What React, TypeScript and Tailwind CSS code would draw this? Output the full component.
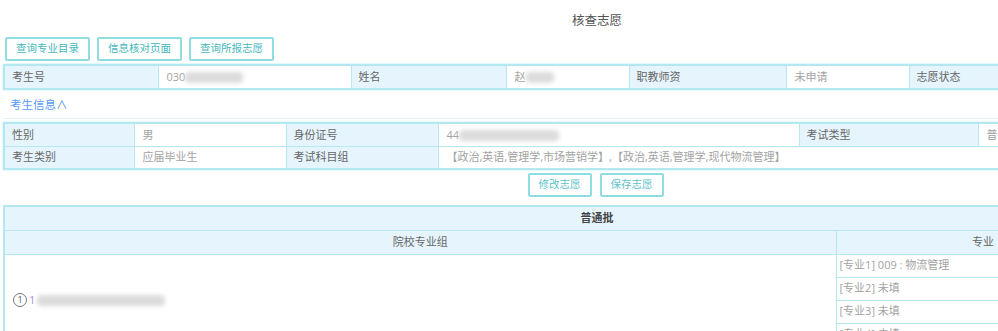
import React from "react";

const FONT = { fontFamily: '"Open Sans", "Noto Sans CJK SC", sans-serif' };

const lbl = "bg-[#e6f5fd] text-[#666] border border-[#b8e6f2] px-[7px] text-left font-normal";
const val = "bg-white text-[#a3a3a3] border border-[#b8e6f2] px-[8px] text-left font-normal";
const head = "bg-[#e6f5fd] border border-[#b8e6f2] text-center font-normal text-[#666]";

function Blur({ w }: { w: number }) {
  return (
    <span
      className="inline-block h-[11px] bg-[#dcdcdc] blur-[2px] align-middle rounded-sm"
      style={{ width: w }}
    />
  );
}

function TopButton({ children }: { children: React.ReactNode }) {
  return (
    <button className="h-[24px] w-[85px] rounded-[2px] border-2 border-[#8edde0] bg-white text-[10.5px] text-[#45b7bd]">
      {children}
    </button>
  );
}

const MAJORS = ["[专业1] 009 : 物流管理", "[专业2] 未填", "[专业3] 未填", "[专业4] 未填"];

export default function App() {
  return (
    <div className="w-[998px] h-[331px] overflow-hidden bg-white" style={FONT}>
      <div className="w-[1194px] px-[3px] text-[11px]">
        <div className="h-[37px] pt-[12px] text-center text-[12.5px] text-[#555]">核查志愿</div>

        <div className="flex gap-[7px] pl-[2px] h-[27px]">
          <TopButton>查询专业目录</TopButton>
          <TopButton>信息核对页面</TopButton>
          <TopButton>查询所报志愿</TopButton>
        </div>

        <table className="w-full border-collapse table-fixed border-2 border-[#b3e8f0] shadow-[0_0_2px_#b3e8f0]">
          <colgroup>
            <col className="w-[154px]" />
            <col className="w-[193px]" />
            <col className="w-[155px]" />
            <col className="w-[123px]" />
            <col className="w-[157px]" />
            <col className="w-[123px]" />
            <col className="w-[155px]" />
            <col />
          </colgroup>
          <tbody>
            <tr className="h-[24px]">
              <th className={lbl}>考生号</th>
              <td className={val}>
                030<Blur w={58} />
              </td>
              <th className={lbl}>姓名</th>
              <td className={val}>
                赵<Blur w={28} />
              </td>
              <th className={lbl}>职教师资</th>
              <td className={val}>未申请</td>
              <th className={lbl}>志愿状态</th>
              <td className={val}></td>
            </tr>
          </tbody>
        </table>

        <div className="h-[29px] border-b border-[#e6f5f7] pl-[7px] pt-[6px] text-[11.5px] text-[#5b9cf2]">
          考生信息∧
        </div>

        <table className="mt-[3px] w-full border-collapse table-fixed border-2 border-[#b3e8f0] shadow-[0_0_2px_#b3e8f0]">
          <colgroup>
            <col className="w-[130px]" />
            <col className="w-[152px]" />
            <col className="w-[152px]" />
            <col className="w-[361px]" />
            <col className="w-[179px]" />
            <col />
          </colgroup>
          <tbody>
            <tr className="h-[23px]">
              <th className={lbl}>性别</th>
              <td className={val}>男</td>
              <th className={lbl}>身份证号</th>
              <td className={val}>
                44<Blur w={100} />
              </td>
              <th className={lbl}>考试类型</th>
              <td className={val}>普通</td>
            </tr>
            <tr className="h-[23px]">
              <th className={lbl}>考生类别</th>
              <td className={val}>应届毕业生</td>
              <th className={lbl}>考试科目组</th>
              <td className={val} colSpan={3}>
                【政治,英语,管理学,市场营销学】,【政治,英语,管理学,现代物流管理】
              </td>
            </tr>
          </tbody>
        </table>

        <div className="flex justify-center gap-[8px] pt-[3px] h-[35px] pr-[3px]">
          <button className="h-[24px] w-[64px] rounded-[2px] border-2 border-[#8edde0] bg-white text-[10.5px] text-[#5ec3c8]">
            修改志愿
          </button>
          <button className="h-[24px] w-[64px] rounded-[2px] border-2 border-[#8edde0] bg-white text-[10.5px] text-[#5ec3c8]">
            保存志愿
          </button>
        </div>

        <table className="w-full border-collapse table-fixed border-2 border-[#b3e8f0]">
          <colgroup>
            <col className="w-[832px]" />
            <col className="w-[294px]" />
            <col />
          </colgroup>
          <tbody>
            <tr className="h-[24px]">
              <th colSpan={3} className="bg-[#e6f5fd] border border-[#b8e6f2] text-center font-bold text-[#444]">
                普通批
              </th>
            </tr>
            <tr className="h-[24px]">
              <th className={head}>院校专业组</th>
              <th className={head}>专业</th>
              <th className={head}></th>
            </tr>
            {MAJORS.map((m, i) => (
              <tr key={m} className="h-[23px]">
                {i === 0 && (
                  <td rowSpan={4} className="bg-white border border-[#b8e6f2] px-[8px] align-middle">
                    <span className="inline-flex items-center gap-[2px] text-[#b08ac8]">
                      <span className="inline-flex h-[14px] w-[14px] items-center justify-center rounded-full border border-[#777] text-[9px] text-[#555]">
                        1
                      </span>
                      1<Blur w={128} />
                    </span>
                  </td>
                )}
                <td className="bg-white border border-[#b8e6f2] px-[3px] text-[#a3a3a3]">{m}</td>
                <td className="bg-white border border-[#b8e6f2]"></td>
              </tr>
            ))}
          </tbody>
        </table>
      </div>
    </div>
  );
}
